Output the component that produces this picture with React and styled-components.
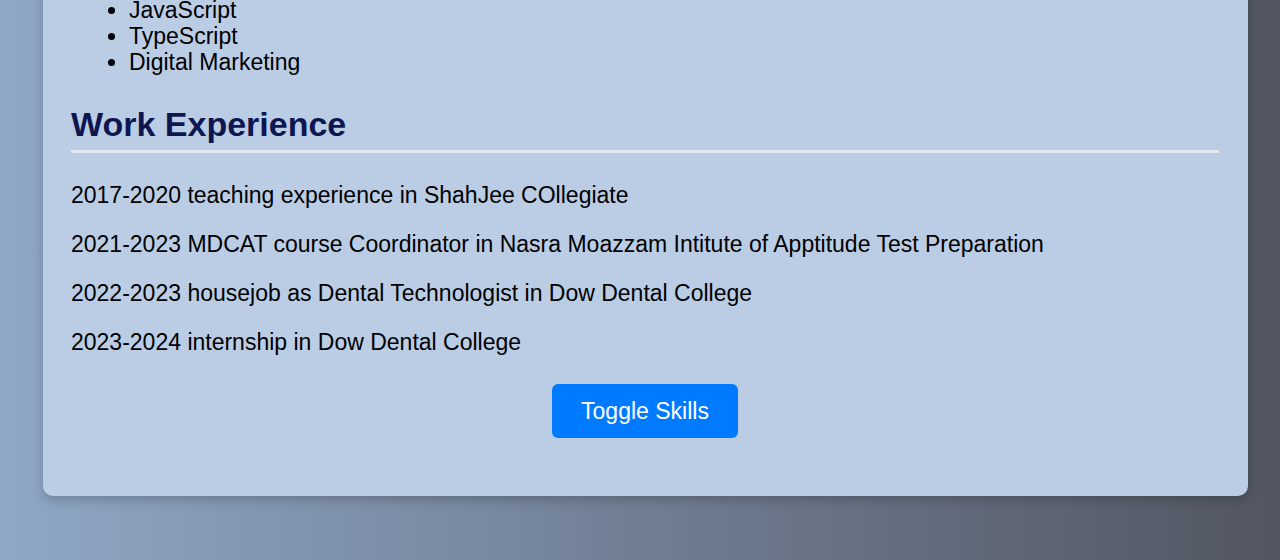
import React, { useState } from 'react';
import styled, { createGlobalStyle } from 'styled-components';

const skills = ['JavaScript', 'TypeScript', 'Digital Marketing'];

const experience = [
  '2017-2020 teaching experience in ShahJee COllegiate',
  '2021-2023 MDCAT course Coordinator in Nasra Moazzam Intitute of Apptitude Test Preparation',
  '2022-2023 housejob as Dental Technologist in Dow Dental College',
  '2023-2024 internship in Dow Dental College',
];

function App() {
  const [showSkills, setShowSkills] = useState(true);

  return (
    <>
      <GlobalStyle />
      <Page>
        <Card>
          {showSkills && (
            <SkillList>
              {skills.map((skill) => (
                <li key={skill}>{skill}</li>
              ))}
            </SkillList>
          )}
          <SectionTitle>Work Experience</SectionTitle>
          <ExperienceList>
            {experience.map((item) => (
              <ExperienceItem key={item}>{item}</ExperienceItem>
            ))}
          </ExperienceList>
          <ButtonRow>
            <ToggleButton onClick={() => setShowSkills(!showSkills)}>
              Toggle Skills
            </ToggleButton>
          </ButtonRow>
        </Card>
      </Page>
    </>
  );
}

const GlobalStyle = createGlobalStyle`
  html, body {
    margin: 0;
    padding: 0;
  }

  body {
    font-family: "Liberation Sans", Arial, sans-serif;
    background: linear-gradient(to right, #8fa7c6, #525661);
  }
`;

const Page = styled.div`
  height: 560px;
  overflow: hidden;
  display: flex;
  flex-direction: column;
  justify-content: flex-end;
  padding: 0 32px 64px 43px;
  box-sizing: border-box;
`;

const Card = styled.div`
  background-color: #bbcde5;
  border-radius: 10px;
  box-shadow: 0 4px 12px rgba(0, 0, 0, 0.2);
  padding: 30px 29px 58px 28px;
  flex-shrink: 0;
`;

const SkillList = styled.ul`
  margin: 0;
  padding-left: 58px;
  font-size: 23px;
  line-height: 26px;
  color: #000;
`;

const SectionTitle = styled.h2`
  margin: 31px 0 0;
  padding-bottom: 7px;
  border-bottom: 3px solid #e4e9f1;
  font-size: 34px;
  line-height: 37px;
  font-weight: 700;
  color: #0d1650;
`;

const ExperienceList = styled.div`
  display: flex;
  flex-direction: column;
  gap: 24px;
  margin-top: 30px;
`;

const ExperienceItem = styled.p`
  margin: 0;
  font-size: 23px;
  line-height: 25px;
  color: #000;
`;

const ButtonRow = styled.div`
  display: flex;
  justify-content: center;
  margin-top: 29px;
`;

const ToggleButton = styled.button`
  background-color: #007bff;
  color: #fff;
  border: none;
  border-radius: 6px;
  padding: 14px 29px;
  font-family: inherit;
  font-size: 23px;
  line-height: 26px;
  cursor: pointer;
`;

export default App;
